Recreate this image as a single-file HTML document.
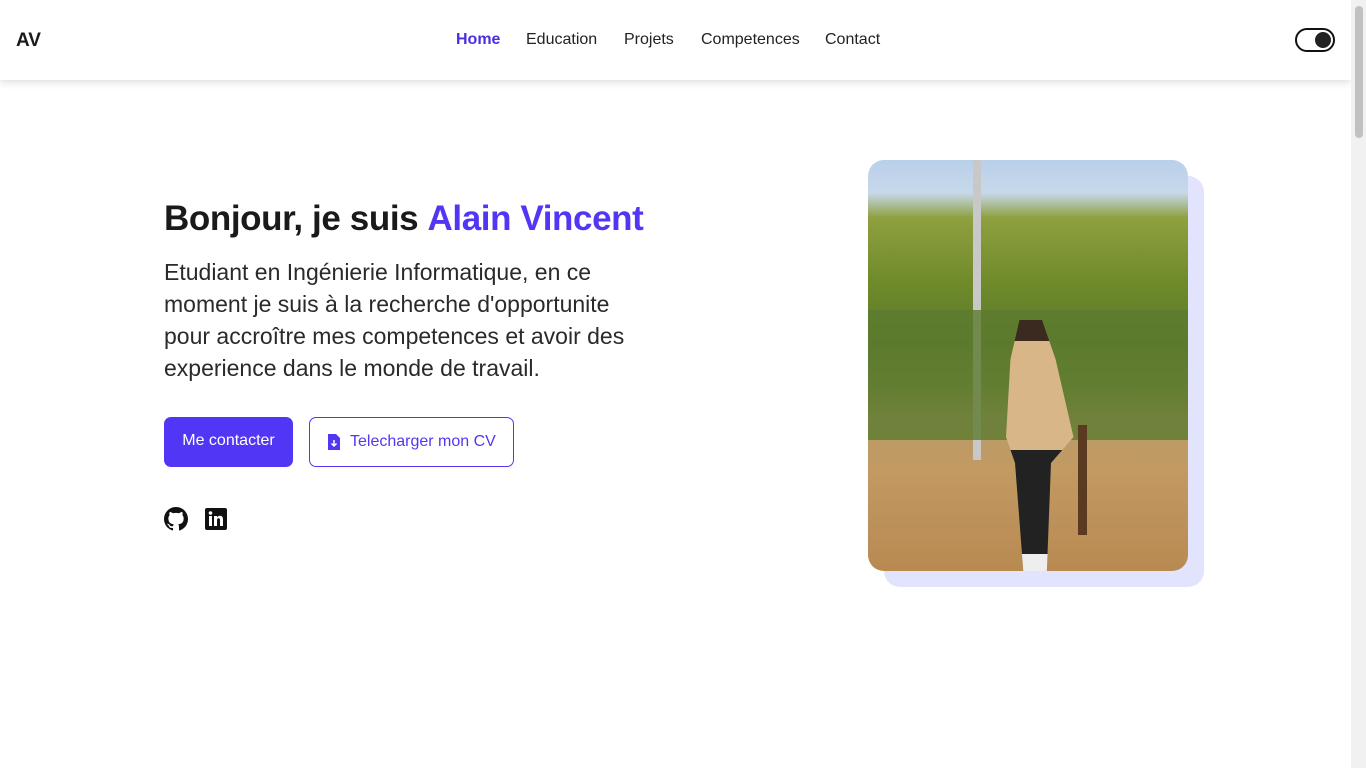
<!DOCTYPE html>
<html><head><meta charset="utf-8"><style>
*{box-sizing:border-box;margin:0;padding:0}
html,body{width:1366px;height:768px;overflow:hidden;background:#fff;font-family:"Liberation Sans",sans-serif;color:#1a1a1a}
.sb{position:absolute;right:0;top:0;width:15px;height:768px;background:#f1f1f1}
.sb div{position:absolute;left:4px;top:6px;width:8px;height:132px;background:#c1c1c1;border-radius:4px}
nav{position:absolute;left:0;top:0;width:1351px;height:80px;background:#fff;box-shadow:0 2px 8px rgba(0,0,0,.15)}
.logo{position:absolute;left:16px;top:30px;font-weight:bold;font-size:19px}
.links{position:absolute;top:31px;left:456px;font-size:16px;color:#222}
.links span{position:absolute;white-space:nowrap}
.tog{position:absolute;left:1295px;top:28px;width:40px;height:24px;border:2px solid #111;border-radius:12px}
.tog i{position:absolute;right:2px;top:2px;width:16px;height:16px;border-radius:50%;background:#222}
h1{position:absolute;left:164px;top:199px;font-size:35px;font-weight:bold;white-space:nowrap;letter-spacing:-0.4px}
h1 b{color:#5137f5}
p{position:absolute;left:164px;top:256px;width:490px;font-size:23px;line-height:32px;color:#2a2a2a}
.b1{position:absolute;left:164px;top:417px;width:129px;height:50px;background:#5137f5;color:#fff;border-radius:7px;font-size:16px;text-align:center;line-height:47px}
.b2{position:absolute;left:309px;top:417px;width:205px;height:50px;border:1.5px solid #5137f5;color:#5137f5;border-radius:7px;font-size:16px;line-height:47px;padding-left:40px}
.b2 svg{position:absolute;left:18px;top:16px}
.shadow{position:absolute;left:884px;top:176px;width:320px;height:411px;background:#e1e4fc;border-radius:16px}
.photo{position:absolute;left:868px;top:160px;width:320px;height:411px;border-radius:16px;overflow:hidden;
background:linear-gradient(180deg,#b9d0ea 0%,#c7d8ea 8%,#8fa040 14%,#6f8a2a 30%,#5c7a2c 45%,#7a8a40 55%,#b89a6a 62%,#c29a62 75%,#b88a52 100%)}
</style></head><body>
<nav><div class="logo">AV</div>
<div class="links"><span style="left:0;color:#4a2fe0;font-weight:bold">Home</span><span style="left:70px">Education</span><span style="left:168px">Projets</span><span style="left:245px">Competences</span><span style="left:369px">Contact</span></div>
<div class="tog"><i></i></div></nav>
<div class="sb"><div></div></div>
<h1>Bonjour, je suis <b>Alain Vincent</b></h1>
<p>Etudiant en Ingénierie Informatique, en ce moment je suis à la recherche d'opportunite pour accroître mes competences et avoir des experience dans le monde de travail.</p>
<div class="b1">Me contacter</div>
<div class="b2"><svg width="12" height="16" viewBox="0 0 12 16"><path d="M0 0h8l4 4v12H0z" fill="#5137f5"/><path d="M6 6v6M3.5 9.5L6 12l2.5-2.5" stroke="#fff" stroke-width="1.5" fill="none"/></svg>Telecharger mon CV</div>
<svg style="position:absolute;left:164px;top:507px" width="24" height="24" viewBox="0 0 16 16"><path fill="#111" d="M8 0C3.58 0 0 3.580 0 8c0 3.54 2.29 6.53 5.47 7.59.4.07.55-.17.55-.38v-1.33c-2.230.48-2.7-1.07-2.7-1.07-.36-.92-.89-1.17-.89-1.17-.73-.5.06-.49.06-.49.8.06 1.23.83 1.23.83.71 1.22 1.87.87 2.33.66.07-.52.28-.87.5-1.07-1.78-.2-3.64-.89-3.64-3.95 0-.87.31-1.59.82-2.15-.08-.2-.36-1.02.08-2.12 0 0 .67-.21 2.2.82a7.6 7.6 0 014 0c1.53-1.04 2.2-.82 2.2-.82.44 1.1.16 1.92.08 2.120.51.56.82 1.27.82 2.15 0 3.07-1.87 3.75-3.65 3.95.29.25.54.73.54 1.48v2.2c0 .21.15.46.55.38A8 8 0 0016 8c0-4.42-3.58-8-8-8z"/></svg>
<svg style="position:absolute;left:205px;top:508px" width="22" height="22" viewBox="0 0 22 22"><rect width="22" height="22" rx="2" fill="#111"/><rect x="4" y="8" width="3" height="10" fill="#fff"/><circle cx="5.5" cy="5" r="1.8" fill="#fff"/><path d="M9 8h3v1.5c.6-1 1.6-1.7 3-1.7 2.2 0 3 1.4 3 3.8V18h-3v-5.8c0-1.2-.4-1.9-1.4-1.9s-1.6.7-1.6 1.9V18H9z" fill="#fff"/></svg>
<div class="shadow"></div>
<div class="photo">
<div style="position:absolute;left:105px;top:0;width:8px;height:300px;background:#c8c8c8"></div>
<div style="position:absolute;left:0;top:150px;width:320px;height:130px;background:#5d7a2e;opacity:.8"></div>
<div style="position:absolute;left:120px;top:160px;width:90px;height:260px;background:linear-gradient(180deg,#3a2a20 0 8%,#d8b688 8% 50%,#222 50% 90%,#eee 90%);clip-path:polygon(35% 0,60% 0,75% 15%,95% 45%,70% 55%,65% 100%,40% 100%,30% 55%,20% 45%,25% 15%)"></div>
<div style="position:absolute;left:210px;top:265px;width:9px;height:110px;background:#5a3a20"></div>
</div>
</body></html>
